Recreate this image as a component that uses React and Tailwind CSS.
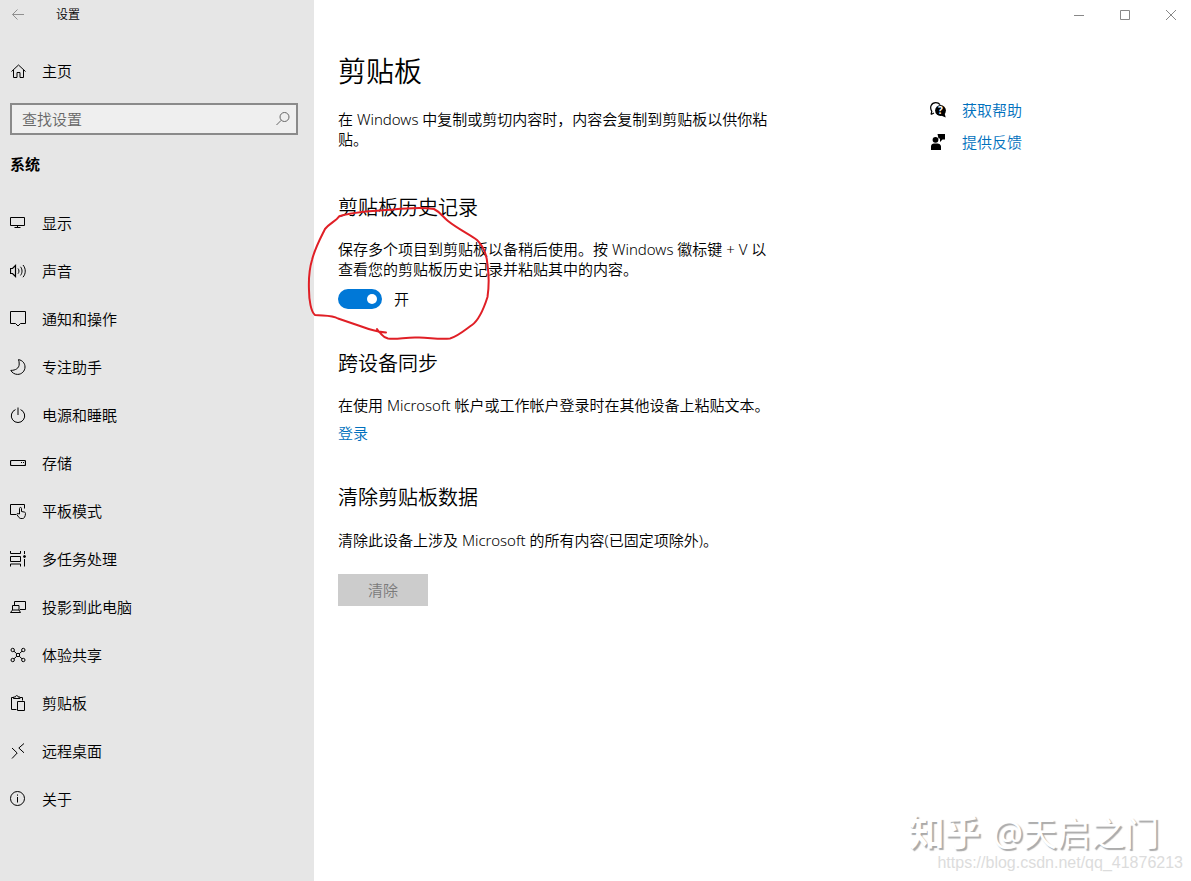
import React from 'react';

const Icon = ({ children, className = 'w-4 h-4' }) => (
  <svg className={`${className} shrink-0`} viewBox="0 0 16 16" fill="none" stroke="currentColor" strokeWidth="1" aria-hidden="true">
    {children}
  </svg>
);

const navItems = [
  {
    label: '显示',
    icon: <path d="M.5 2.5h14v8H.5zM7.5 10.5v2M4.5 12.5h6" />,
  },
  {
    label: '声音',
    icon: (
      <>
        <path d="M.5 5.5h2l3-3v11l-3-3h-2z" strokeWidth="1.2" />
        <path d="M8 5.5c1.3 1.5 1.3 3.7 0 5.2M10.5 3.8c2 2.5 2 6.1 0 8.6M13 2c3 3.6 3 8.6 0 12.2" />
      </>
    ),
  },
  {
    label: '通知和操作',
    icon: <path d="M.5.5h15v12h-5L8 15l-2.5-2.5h-5z" />,
  },
  {
    label: '专注助手',
    icon: <path d="M8.5.6C12.5 1.3 15 4.3 15 8c0 4.1-3.3 7.4-7.4 7.4-2.9 0-5.5-1.6-6.8-4C5.5 11.4 9.2 9.3 9.2 5c0-1.6-.2-3.1-.7-4.400z" />,
  },
  {
    label: '电源和睡眠',
    icon: <path d="M5.5 2.6a6.7 6.7 0 1 0 5 0M8 .5V8" />,
  },
  {
    label: '存储',
    icon: (
      <>
        <rect x=".5" y="5.5" width="15" height="5" rx="1" strokeWidth="1.2" />
        <path d="M11 7.5h1M13 7.5h1" />
      </>
    ),
  },
  {
    label: '平板模式',
    icon: (
      <>
        <path d="M6 11.5H.5v-10h14v4" />
        <path d="M9.5 11V5.5c0-1.4 2-1.4 2 0v3l3 .6c.7.2 1 .6 1 1.3 0 1.7-.4 3-1.2 4.2-.4.6-.8.9-1.5.9h-2c-.7 0-1.2-.3-1.6-.8L7 11.8c-.6-.8.3-1.7 1.1-1.2z" />
      </>
    ),
  },
  {
    label: '多任务处理',
    icon: (
      <>
        <path d="M.5 0v2.5h10V0M.5 5.5h10v5H.5zM.5 15.5V13h10v2.5M14.5 0v3M14.5 8v7.5" />
        <circle cx="14.5" cy="5.5" r="1" fill="currentColor" />
      </>
    ),
  },
  {
    label: '投影到此电脑',
    icon: <path d="M4.5 6V2.5h11v8H10M2.5 6.5H9V11H2.5zM2.5 11l-2 2.5h10L9 11" />,
  },
  {
    label: '体验共享',
    icon: (
      <>
        <circle cx="2.7" cy="3" r="1.7" />
        <circle cx="13.3" cy="3" r="1.7" />
        <circle cx="2.7" cy="13" r="1.7" />
        <circle cx="13.3" cy="13" r="1.7" />
        <circle cx="8" cy="8" r="1.7" />
        <path d="M4 4.2l2.8 2.6M12 4.2L9.2 6.8M4 11.8l2.8-2.6M12 11.8L9.2 9.2" />
      </>
    ),
  },
  {
    label: '剪贴板',
    icon: <path d="M6.5 14.5h-5v-12h2M10 2.5h2.5v3M3.5 3.5V2h2c0-2 2.5-2 2.5 0h2v1.5zM7.5 6.5h7v9h-7z" />,
  },
  {
    label: '远程桌面',
    icon: <path d="M2 5l5.2 5L2 15.5M14 .5L8.8 5l5.2 4.8" />,
  },
  {
    label: '关于',
    icon: (
      <>
        <circle cx="7.5" cy="7.5" r="7" />
        <path d="M7.5 6v5.5M7.5 3.5v1.2" />
      </>
    ),
  },
];

const Sidebar = () => (
  <aside className="w-[314px] shrink-0 bg-[#e6e6e6]">
    <header className="flex items-center h-[30px] px-[10px]">
      <button type="button" aria-label="返回" className="text-[#8f8f8f]">
        <Icon>
          <path d="M14 7.5H2.5M7.5 2.5l-5 5 5 5" />
        </Icon>
      </button>
      <span className="ml-[30px] text-xs">设置</span>
    </header>

    <a href="#home" className="flex items-center gap-4 h-12 mt-[17px] px-[10px]">
      <Icon>
        <path d="M1.5 8.5L8.5 2l7 6.5M3.5 7v7.5H7v-5h3v5h3.5V7" />
      </Icon>
      主页
    </a>

    <div className="flex items-center mx-[10px] mr-4 mt-2 h-8 border-2 border-[#8a8a8a] bg-[#efefef] text-[#666]">
      <input
        type="text"
        aria-label="查找设置"
        placeholder="查找设置"
        className="flex-1 min-w-0 h-full px-[10px] bg-transparent outline-none placeholder:text-[#666]"
      />
      <Icon className="w-4 h-4 mr-[5px]">
        <circle cx="9.5" cy="6" r="4.5" />
        <path d="M6.2 9.3L1.5 14" />
      </Icon>
    </div>

    <h2 className="mt-[19px] px-[10px] font-bold">系统</h2>

    <nav className="mt-[25px]">
      {navItems.map((item) => (
        <a key={item.label} href="#" className="flex items-center gap-4 h-12 px-[10px]">
          <Icon>{item.icon}</Icon>
          {item.label}
        </a>
      ))}
    </nav>
  </aside>
);

const WindowControls = () => (
  <div className="flex justify-end gap-[6px] h-[30px] text-[#888]">
    <button type="button" aria-label="最小化" className="w-10 flex items-center justify-center">
      <Icon>
        <path d="M3 8.5h10" />
      </Icon>
    </button>
    <button type="button" aria-label="最大化" className="w-10 flex items-center justify-center">
      <Icon>
        <path d="M3.5 3.5h9v9h-9z" />
      </Icon>
    </button>
    <button type="button" aria-label="关闭" className="w-10 flex items-center justify-center">
      <Icon>
        <path d="M3 3l10 10M13 3L3 13" />
      </Icon>
    </button>
  </div>
);

const Watermark = () => (
  <div className="absolute right-2 bottom-2 flex flex-col items-end pointer-events-none">
    <p className="mr-6 mb-[2px] flex items-center gap-3 text-[34px] leading-[36px] font-normal text-white [text-shadow:2px_2px_1px_#aaa]">
      <span className="text-[36px] font-bold">知乎</span>
      <span>@天启之门</span>
    </p>
    <p className="font-['Liberation_Sans',sans-serif] text-base leading-5 text-[#dcdcdc]">
      https://blog.csdn.net/qq_41876213
    </p>
  </div>
);

const App = () => {
  return (
    <div className="relative flex min-h-screen bg-white text-black text-[15px] leading-5 font-[350] font-['Noto_Sans','Noto_Sans_CJK_SC',sans-serif]">
      <Sidebar />

      <div className="flex-1 min-w-0">
        <WindowControls />

        <div className="flex items-start pl-6 pt-[23px]">
          <main className="w-[440px]">
            <h1 className="text-[28px] leading-9">剪贴板</h1>
            <p className="mt-5">在 Windows 中复制或剪切内容时，内容会复制到剪贴板以供你粘贴。</p>

            {/* Clipboard history */}
            <section className="relative mt-11">
              <h2 className="text-xl leading-[30px]">剪贴板历史记录</h2>
              <p className="mt-4">
                保存多个项目到剪贴板以备稍后使用。按 Windows 徽标键 + V 以查看您的剪贴板历史记录并粘贴其中的内容。
              </p>
              <label className="flex items-center gap-3 w-fit mt-[10px]">
                <input
                  type="checkbox"
                  role="switch"
                  defaultChecked
                  className="relative appearance-none w-11 h-5 rounded-full bg-[#0078d7] before:absolute before:top-[5px] before:right-[5px] before:size-[10px] before:rounded-full before:bg-white"
                />
                开
              </label>
              <svg
                className="absolute -left-[34px] top-[10px] w-[192px] h-[142px] pointer-events-none"
                viewBox="304 203 192 142"
                fill="none"
                stroke="#e01f26"
                strokeWidth="2"
                strokeLinecap="round"
                strokeLinejoin="round"
                aria-hidden="true"
              >
                <path d="M386 332.5C378 332 368 329 360 326L338 318.5C332 315 324 316 315 315C311 312 309 300 309 290C308.5 278 309 270 312 260C315 248 319 241 325 229C330 223 336 221 339 216.5C350 212 372 211 393 209.5C408 208 425 207.5 434 209C440 212 442 216 448 221C458 229 469 234 477 240C484 247 487 256 487.5 265C489 275 489.5 283 487.5 297C484 308 479 320 472 325C465 330 457 337 450 338.5C438 340 428 337 417 337.5C406 337 396 340 388 338.5C382 337 382 334 379 332L377 329" />
              </svg>
            </section>

            {/* Sync across devices */}
            <section className="mt-10">
              <h2 className="text-xl leading-[30px]">跨设备同步</h2>
              <p className="mt-4">在使用 Microsoft 帐户或工作帐户登录时在其他设备上粘贴文本。</p>
              <a href="#signin" className="block w-fit mt-2 text-[#0070bd]">登录</a>
            </section>

            {/* Clear clipboard data */}
            <section className="mt-10">
              <h2 className="text-xl leading-[30px]">清除剪贴板数据</h2>
              <p className="mt-[17px]">清除此设备上涉及 Microsoft 的所有内容(已固定项除外)。</p>
              <button type="button" disabled className="block mt-6 w-[90px] h-8 bg-[#ccc] text-[#7a7a7a]">
                清除
              </button>
            </section>
          </main>

          <aside className="flex flex-col gap-3 ml-[152px] mt-[47px]">
            <a href="#help" className="flex items-center gap-4 text-[#0070bd]">
              <Icon className="w-4 h-4 text-black">
                <path d="M1 12.5l.8-3.2C-.7 5.5 1.2.7 5.8.7c1.8 0 3.3.7 4.3 1.9M1 12.5l3-1.5" strokeWidth="1.2" />
                <circle cx="10.5" cy="8.5" r="5.4" fill="currentColor" stroke="none" />
                <path d="M14.5 11l1.2 4.5-4.7-2z" fill="currentColor" stroke="none" />
                <text x="10.5" y="12.2" textAnchor="middle" fontSize="10" fontWeight="700" fill="white" stroke="none">?</text>
              </Icon>
              获取帮助
            </a>
            <a href="#feedback" className="flex items-center gap-4 text-[#0070bd]">
              <Icon className="w-4 h-4 text-black">
                <g fill="currentColor" stroke="none">
                  <circle cx="5.5" cy="5.8" r="2.9" />
                  <path d="M1 16v-3.5C1 10.5 2.5 9.5 4 9.5h3.5c1.5 0 3.5 1 3.5 3V16zM7.5 0H15v5.5h-2.5L10 8V4.5H8.5z" />
                </g>
              </Icon>
              提供反馈
            </a>
          </aside>
        </div>
      </div>

      <Watermark />
    </div>
  );
};

export default App;
